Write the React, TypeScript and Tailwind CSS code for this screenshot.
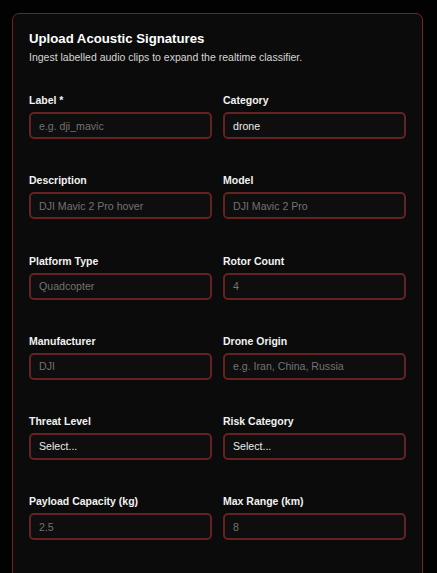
import React from "react";

type Field = {
  label: string;
  kind: "input" | "select";
  placeholder?: string;
  value?: string;
};

const rows: Field[][] = [
  [
    { label: "Label *", kind: "input", placeholder: "e.g. dji_mavic" },
    { label: "Category", kind: "input", value: "drone" },
  ],
  [
    { label: "Description", kind: "input", placeholder: "DJI Mavic 2 Pro hover" },
    { label: "Model", kind: "input", placeholder: "DJI Mavic 2 Pro" },
  ],
  [
    { label: "Platform Type", kind: "input", placeholder: "Quadcopter" },
    { label: "Rotor Count", kind: "input", placeholder: "4" },
  ],
  [
    { label: "Manufacturer", kind: "input", placeholder: "DJI" },
    { label: "Drone Origin", kind: "input", placeholder: "e.g. Iran, China, Russia" },
  ],
  [
    { label: "Threat Level", kind: "select" },
    { label: "Risk Category", kind: "select" },
  ],
  [
    { label: "Payload Capacity (kg)", kind: "input", placeholder: "2.5" },
    { label: "Max Range (km)", kind: "input", placeholder: "8" },
  ],
];

const boxCls =
  "w-full h-[27px] rounded-[5px] border-2 border-[#652222] bg-[#0e0e0e] px-[8px] text-[10.6px] leading-[15px] outline-none";

function FieldView({ f }: { f: Field }) {
  return (
    <div className="flex flex-col gap-[4px]">
      <label className="text-[10.5px] leading-[15px] font-bold text-[#f2f2f2]">{f.label}</label>
      {f.kind === "select" ? (
        <select className={boxCls + " appearance-none text-[#ececec]"} defaultValue="">
          <option value="">Select...</option>
        </select>
      ) : (
        <input
          className={boxCls + " text-[#ececec] placeholder:text-[#727272]"}
          placeholder={f.placeholder}
          defaultValue={f.value}
        />
      )}
    </div>
  );
}

export default function App() {
  return (
    <div
      className="min-h-screen bg-[#020202] pt-[13px]"
      style={{ fontFamily: '"Liberation Sans", Arial, sans-serif' }}
    >
      <div className="ml-3 w-[411px] rounded-[7px] border border-[#762323] bg-[#0b0b0b] px-4 pt-4 pb-10">
        <h1 className="text-[13.2px] leading-[17px] font-bold text-white">Upload Acoustic Signatures</h1>
        <p className="mt-[3px] text-[10.5px] leading-[15px] text-[#d6d6d6]">
          Ingest labelled audio clips to expand the realtime classifier.
        </p>
        <div className="mt-[28px] grid grid-cols-2 gap-x-[11px] gap-y-[34.3px]">
          {rows.flat().map((f) => (
            <FieldView key={f.label} f={f} />
          ))}
        </div>
      </div>
    </div>
  );
}
